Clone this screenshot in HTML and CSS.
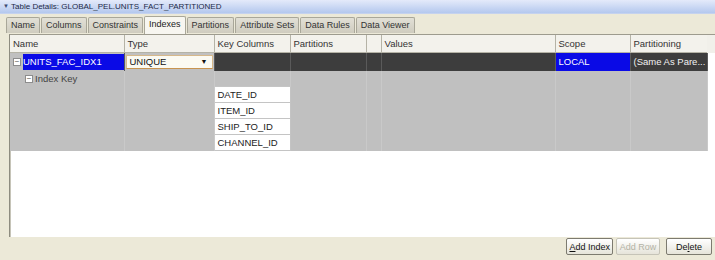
FILE: index.html
```html
<!DOCTYPE html>
<html lang="en">
<head>
    <meta charset="UTF-8">
    <title>Table Details</title>
<link rel="stylesheet" href="styles.css">
</head>
<body>
  <div class="titlebar"><span class="caret">&#9660;</span> Table Details: GLOBAL_PEL.UNITS_FACT_PARTITIONED</div>

  <div class="tabs">
    <div class="tab">Name</div>
    <div class="tab">Columns</div>
    <div class="tab">Constraints</div>
    <div class="tab active">Indexes</div>
    <div class="tab">Partitions</div>
    <div class="tab">Attribute Sets</div>
    <div class="tab">Data Rules</div>
    <div class="tab">Data Viewer</div>
  </div>

  <div class="grid-wrap">
    <table class="grid">
      <colgroup>
        <col style="width:114px">
        <col style="width:90px">
        <col style="width:76px">
        <col style="width:76px">
        <col style="width:15px">
        <col style="width:174px">
        <col style="width:75px">
        <col style="width:77px">
      </colgroup>
      <thead>
        <tr>
          <th>Name</th>
          <th>Type</th>
          <th>Key Columns</th>
          <th>Partitions</th>
          <th></th>
          <th>Values</th>
          <th>Scope</th>
          <th>Partitioning</th>
        </tr>
      </thead>
      <tbody>
        <tr class="row-index">
          <td class="name-cell"><div class="name-inner"><span class="tree-box">&minus;</span><span class="sel">UNITS_FAC_IDX1</span></div></td>
          <td class="type-cell"><div class="combo"><span>UNIQUE</span><span class="arrow">&#9660;</span></div></td>
          <td></td>
          <td></td>
          <td></td>
          <td></td>
          <td class="sel-cell">LOCAL</td>
          <td>(Same As Pare...</td>
        </tr>
        <tr class="row-gray">
          <td class="key-label"><div class="label-inner"><span class="tree-box">&minus;</span>Index Key</div></td>
          <td></td><td></td><td></td><td></td><td></td><td></td><td></td>
        </tr>
        <tr class="row-gray">
          <td></td><td></td><td class="key">DATE_ID</td><td></td><td></td><td></td><td></td><td></td>
        </tr>
        <tr class="row-gray">
          <td></td><td></td><td class="key">ITEM_ID</td><td></td><td></td><td></td><td></td><td></td>
        </tr>
        <tr class="row-gray">
          <td></td><td></td><td class="key">SHIP_TO_ID</td><td></td><td></td><td></td><td></td><td></td>
        </tr>
        <tr class="row-gray">
          <td></td><td></td><td class="key">CHANNEL_ID</td><td></td><td></td><td></td><td></td><td></td>
        </tr>
      </tbody>
    </table>
  </div>

  <div class="actions">
    <button class="btn"><u>A</u>dd Index</button>
    <button class="btn disabled">Add Row</button>
    <button class="btn wide">De<u>l</u>ete</button>
  </div>
</body>
</html>
```

FILE: styles.css
```css
body{
  margin: 0;
  width: 715px;
  height: 260px;
  overflow: hidden;
  background-color: #ece9d8;
  font-family: "Liberation Sans", Arial, sans-serif;
  font-size: 9.5px;
  color: #222;
}

.titlebar{
  height: 13px;
  line-height: 13px;
  padding-left: 3px;
  font-size: 8px;
  color: #1c2a48;
  background: linear-gradient(#e4eafa, #b4c8ee);
  border-bottom: 1px solid #c5d2ee;
}

.caret{
  font-size: 6px;
  color: #3a4a70;
  vertical-align: 1px;
}

.tabs{
  display: flex;
  height: 17px;
  padding-left: 6px;
  margin-top: 2px;
}

.tab{
  height: 15px;
  line-height: 15px;
  margin-top: 1px;
  margin-right: 1px;
  padding: 0 4px;
  font-size: 9px;
  color: #333;
  background: linear-gradient(#e2e0d6, #cfccbf);
  border: 1px solid #a9a799;
  border-bottom: none;
  border-radius: 2px 2px 0 0;
}

.tab.active{
  margin-top: 0;
  height: 17px;
  background: #f7f6f0;
  color: #222;
}

.grid-wrap{
  margin-left: 9px;
  margin-top: 1px;
  height: 202px;
  background-color: #fff;
  border-top: 1px solid #9d9b8e;
  border-left: 1px solid #8e8c80;
  box-shadow: inset 1px 0 0 #c6c4b8;
  position: relative;
}

.grid-wrap::after{
  content: "";
  position: absolute;
  top: 0;
  right: 0;
  width: 8px;
  height: 18px;
  background: #f1f0ea;
}

.grid{
  border-collapse: collapse;
  table-layout: fixed;
  width: 697px;
  line-height: 14px;
}

.grid th{
  height: 17px;
  padding: 0 0 0 3px;
  text-align: left;
  font-weight: normal;
  color: #333;
  background: #f3f2ec;
  border-right: 1px solid #b5b3a6;
  border-bottom: 1px solid #b5b3a6;
  white-space: nowrap;
  overflow: hidden;
}

.grid td{
  padding: 0 0 0 3px;
  white-space: nowrap;
  overflow: hidden;
}

.row-index td{
  height: 16px;
  background: #3d3d3d;
  color: #f2f2f2;
  border-right: 1px solid #5a5a5a;
}

.row-index .name-cell{
  padding: 0;
  background: #c0c0c0;
}

.name-inner,
.label-inner{
  display: flex;
  align-items: center;
  height: 16px;
}

.label-inner{
  height: 15px;
}

.tree-box{
  display: inline-block;
  box-sizing: border-box;
  width: 8px;
  height: 8px;
  line-height: 6px;
  margin: 0 2px 0 3px;
  font-size: 8px;
  text-align: center;
  color: #555;
  background: #fff;
  border: 1px solid #8d8d8d;
}

.sel{
  flex: 1;
  height: 16px;
  line-height: 16px;
  background: #0a0ae6;
  color: #fff;
}

.row-index .type-cell{
  padding: 1px;
  background: #c0c0c0;
}

.combo{
  display: flex;
  justify-content: space-between;
  align-items: center;
  height: 12px;
  padding: 0 4px 0 3px;
  background: #fbfaf2;
  border: 1px solid #d6b88a;
  border-bottom-color: #c89450;
  color: #111;
}

.arrow{
  font-size: 7px;
  color: #111;
}

.row-index .sel-cell{
  background: #0a0ae6;
  color: #fff;
}

.row-gray td{
  height: 15px;
  background: #c0c0c0;
  border-right: 1px solid #c9c9c9;
  color: #444;
}

.row-gray .key-label{
  padding-left: 15px;
}

.key-label .tree-box{
  margin-left: 0;
}

.row-gray .key{
  height: 15px;
  line-height: 13px;
  background: #fff;
  color: #222;
  border: 1px solid #c4c4c4;
}

.actions{
  display: flex;
  justify-content: flex-end;
  gap: 3px;
  padding: 1px 3px 0 0;
}

.btn{
  height: 17px;
  padding: 0 2px;
  font-family: "Liberation Sans", Arial, sans-serif;
  font-size: 9px;
  color: #111;
  background: linear-gradient(#ffffff, #e6e4da);
  border: 1px solid #7d7b70;
  border-radius: 2px;
}

.btn.disabled{
  width: 44px;
  color: #b3b2a6;
  border-color: #c6c4b8;
}

.btn.wide{
  width: 46px;
  margin-left: 3px;
}
```
